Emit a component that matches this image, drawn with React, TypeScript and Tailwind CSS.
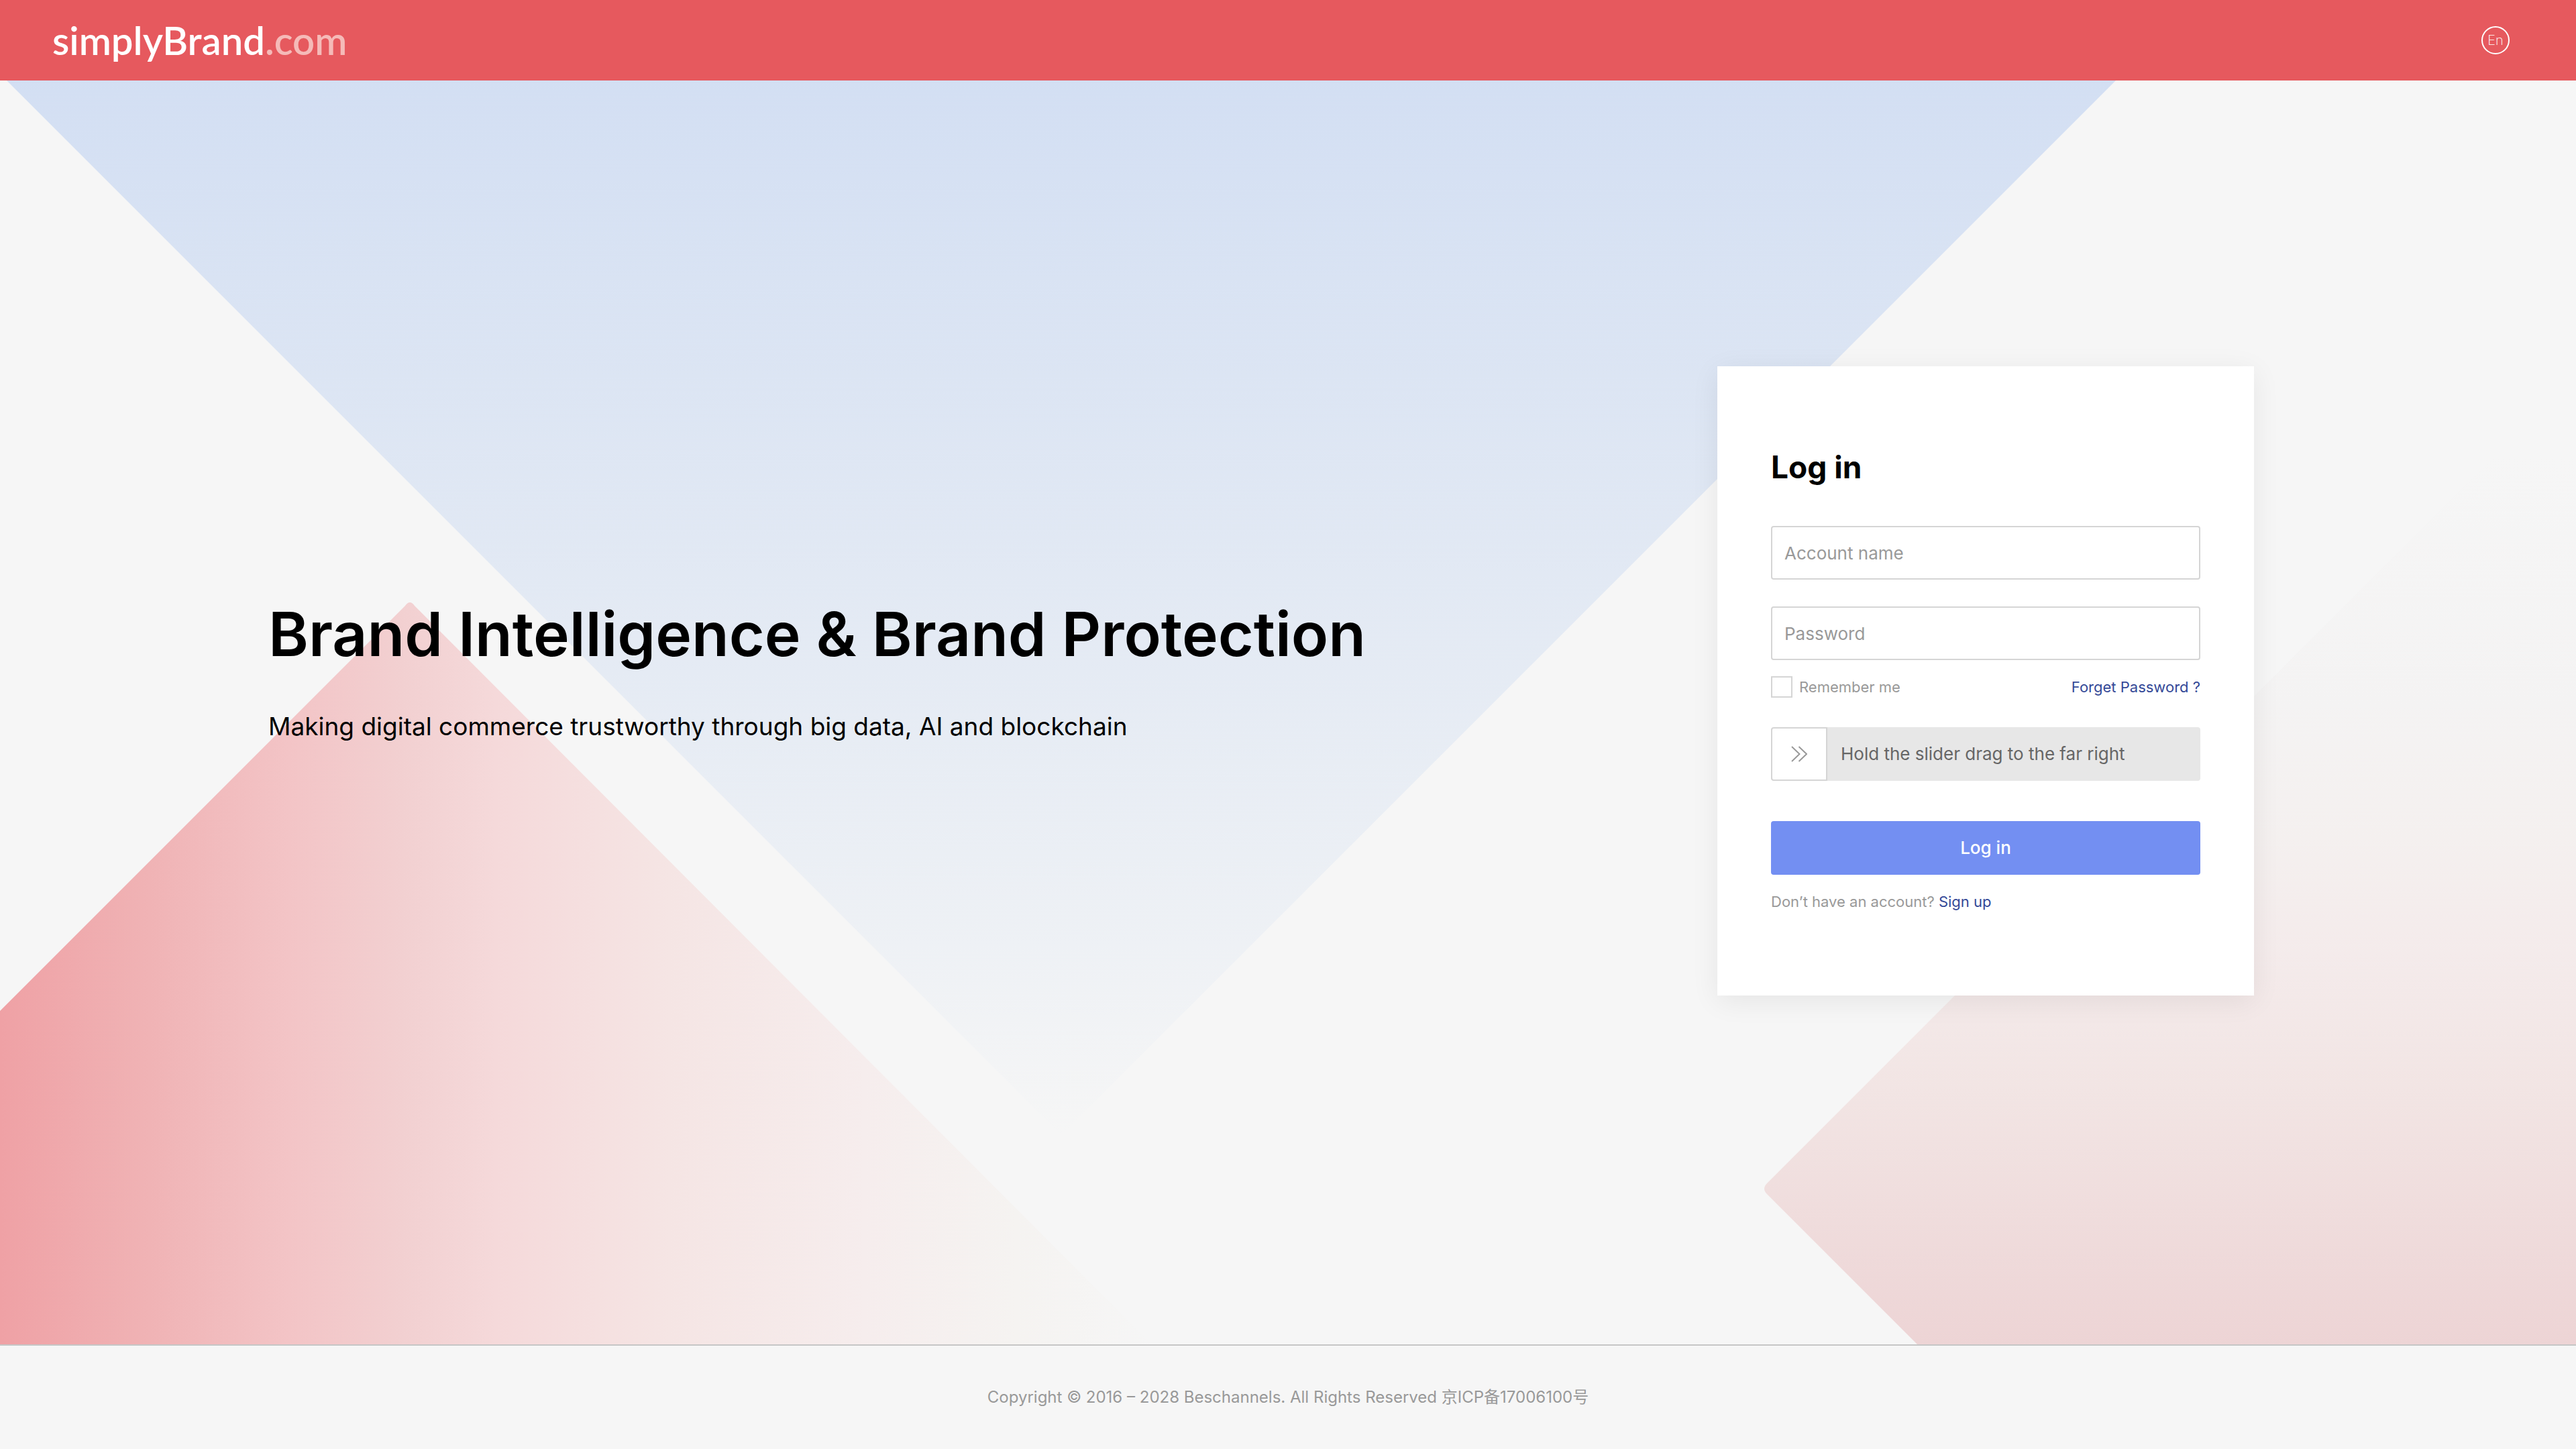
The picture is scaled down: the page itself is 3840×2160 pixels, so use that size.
import React from "react";

function Backdrop() {
  return (
    <svg
      aria-hidden="true"
      className="pointer-events-none absolute inset-0 h-full w-full"
      viewBox="0 0 3840 1884"
      preserveAspectRatio="xMidYMid slice"
    >
      <defs>
        <linearGradient id="blue" gradientUnits="userSpaceOnUse" x1="0" y1="0" x2="0" y2="1572">
          <stop offset="0" stopColor="#d3dff3" />
          <stop offset="0.56" stopColor="#e5ebf4" />
          <stop offset="0.82" stopColor="#eef1f5" />
          <stop offset="1" stopColor="#f6f6f6" />
        </linearGradient>
        <linearGradient id="rose" gradientUnits="userSpaceOnUse" x1="0" y1="0" x2="1720" y2="0">
          <stop offset="0" stopColor="#efa1a5" />
          <stop offset="0.13" stopColor="#f0b3b5" />
          <stop offset="0.25" stopColor="#f3c4c6" />
          <stop offset="0.35" stopColor="#f2d0d1" />
          <stop offset="0.43" stopColor="#f5d9da" />
          <stop offset="0.58" stopColor="#f5e5e4" />
          <stop offset="0.75" stopColor="#f6eded" />
          <stop offset="0.88" stopColor="#f5f3f1" />
          <stop offset="1" stopColor="#f6f6f6" />
        </linearGradient>
        <linearGradient id="blush" gradientUnits="userSpaceOnUse" x1="0" y1="560" x2="0" y2="1884">
          <stop offset="0" stopColor="#f6f6f6" />
          <stop offset="0.28" stopColor="#f4f3f3" />
          <stop offset="0.43" stopColor="#f4f0ef" />
          <stop offset="0.56" stopColor="#f4ebeb" />
          <stop offset="0.71" stopColor="#f2e5e4" />
          <stop offset="1" stopColor="#edd4d5" />
        </linearGradient>
      </defs>
      <path d="M10 0H3154L1582 1572Z" fill="url(#blue)" />
      <path d="M0 1387L604 783Q611 773 618 783L1717 1884H0Z" fill="url(#rose)" />
      <path d="M3840 438L2634 1644Q2626 1652 2634 1660L2858 1884H3840Z" fill="url(#blush)" />
    </svg>
  );
}

function ChevronsIcon() {
  return (
    <svg
      aria-hidden="true"
      className="h-6 w-6"
      viewBox="0 0 24 24"
      fill="none"
      stroke="#999999"
      strokeWidth="2"
    >
      <path d="M1 1L12.500 12L1 23M11.500 1L23 12L11.500 23" />
    </svg>
  );
}

function Header() {
  return (
    <header className="flex h-[120px] items-center justify-between bg-[#e6595e] pr-[99px] pl-[78px]">
      <a href="#" className="font-[Lato,sans-serif] text-[58px] leading-[60px] font-semibold text-white">
        simplyBrand<span className="text-[#f5bab8]">.com</span>
      </a>
      <button
        type="button"
        aria-label="Language: English"
        className="flex h-[42px] w-[42px] items-center justify-center rounded-full border-2 border-white text-[20px] leading-5 font-extralight text-white"
      >
        En
      </button>
    </header>
  );
}

function TextField({ id, label, type }: { id: string; label: string; type: string }) {
  return (
    <input
      id={id}
      type={type}
      aria-label={label}
      placeholder={label}
      className="block h-20 w-full rounded border-2 border-[#d5d5d5] bg-white px-[18px] text-[26px] text-black placeholder:text-[#999999]"
    />
  );
}

function LoginCard() {
  return (
    <form className="w-[800px] shrink-0 bg-white px-20 pt-[120px] pb-[122px] shadow-[0_8px_40px_rgba(0,0,0,0.07)]">
      <h2 className="mb-[58px] text-[46px] leading-[60px] font-bold text-black">Log in</h2>
      <div className="flex flex-col gap-10">
        <TextField id="account" label="Account name" type="text" />
        <TextField id="password" label="Password" type="password" />
      </div>
      <div className="mt-6 flex h-8 items-center justify-between text-[22px] leading-8">
        <label className="flex items-center gap-[10px] text-[#999999]">
          <input type="checkbox" className="h-8 w-8 appearance-none border-2 border-[#d5d5d5] checked:bg-[#738ff2]" />
          Remember me
        </label>
        <a href="#" className="text-[#344997]">
          Forget Password ?
        </a>
      </div>
      <div className="relative mt-11 flex h-20 items-center overflow-hidden rounded bg-[#e7e7e7]">
        <span className="flex h-20 w-[84px] items-center justify-center rounded-l border-2 border-[#d5d5d5] bg-white">
          <ChevronsIcon />
        </span>
        <label htmlFor="verify" className="pl-5 text-[26px] leading-10 text-[#666666]">
          Hold the slider drag to the far right
        </label>
        <input
          id="verify"
          type="range"
          min={0}
          max={100}
          defaultValue={0}
          className="absolute inset-0 h-full w-full cursor-pointer opacity-0"
        />
      </div>
      <button
        type="submit"
        className="mt-[60px] block h-20 w-full rounded bg-[#738ff2] text-[26px] leading-10 font-medium text-white"
      >
        Log in
      </button>
      <p className="mt-[22px] text-[22px] leading-9 text-[#999999]">
        Don’t have an account?{" "}
        <a href="#" className="text-[#344997]">
          Sign up
        </a>
      </p>
    </form>
  );
}

export default function App() {
  return (
    <div className="flex min-h-screen flex-col bg-[#f6f6f6] font-[Inter,'Noto_Sans_CJK_SC',sans-serif]">
      <Header />
      <main className="relative flex flex-1 overflow-hidden">
        <Backdrop />
        <div className="relative flex flex-1 items-center justify-between pr-[480px] pb-[94px] pl-[400px]">
          <section className="pb-8 text-black">
            <h1 className="text-[91px] leading-[120px] font-semibold">
              Brand Intelligence &amp; Brand Protection
            </h1>
            <p className="mt-12 text-[37px] leading-[60px]">
              Making digital commerce trustworthy through big data, AI and blockchain
            </p>
          </section>
          <LoginCard />
        </div>
      </main>
      <footer className="flex h-[156px] items-center justify-center border-t-2 border-[#c6c6c6] text-[24px] leading-9 text-[#999999]">
        <p>Copyright © 2016 – 2028 Beschannels. All Rights Reserved 京ICP备17006100号</p>
      </footer>
    </div>
  );
}
